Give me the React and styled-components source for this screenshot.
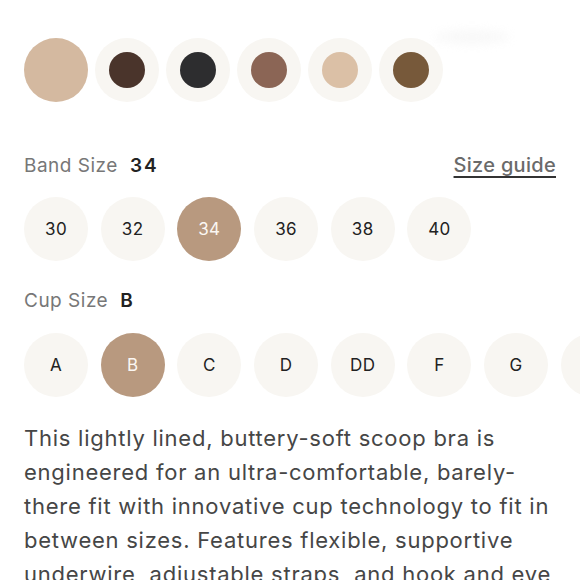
import React from 'react'
import styled, { createGlobalStyle } from 'styled-components'

const GlobalStyle = createGlobalStyle`
  html, body {
    margin: 0;
    padding: 0;
    background: #ffffff;
    overflow: hidden;
  }
  body {
    font-family: Inter, "Noto Sans", "Liberation Sans", sans-serif;
    -webkit-font-smoothing: antialiased;
  }
`

const Page = styled.div`
  position: relative;
  width: 580px;
  height: 580px;
  overflow: hidden;
  padding: 38px 24px 0 24px;
  box-sizing: border-box;

  &::after {
    content: '';
    position: absolute;
    left: 434px;
    top: 30px;
    width: 76px;
    height: 14px;
    border-radius: 50%;
    background: #f4f4f4;
    filter: blur(5px);
    opacity: 0.6;
  }
`

const SwatchRow = styled.div`
  display: flex;
  gap: 7px;
`

const Swatch = styled.button`
  width: 64px;
  height: 64px;
  flex: 0 0 64px;
  border: none;
  padding: 0;
  border-radius: 50%;
  background: ${p => (p.$active ? p.$color : '#f8f6f2')};
  display: flex;
  align-items: center;
  justify-content: center;
`

const Dot = styled.span`
  width: 36px;
  height: 36px;
  border-radius: 50%;
  background: ${p => p.$color};
`

const LabelRow = styled.div`
  display: flex;
  align-items: baseline;
  justify-content: space-between;
  margin-top: ${p => p.$top}px;
  height: 24px;
  line-height: 24px;
`

const Label = styled.div`
  display: flex;
  align-items: baseline;
  gap: 12px;
  font-size: 19px;
  letter-spacing: 0.5px;
  color: #777777;
`

const Value = styled.span`
  font-weight: 600;
  color: #222222;
  letter-spacing: 2px;
`

const Guide = styled.a`
  font-size: 20px;
  font-weight: 500;
  letter-spacing: 0.3px;
  color: #6a6a6a;
  text-decoration: underline;
  text-decoration-color: #333333;
  text-decoration-thickness: 2px;
  text-underline-offset: 4px;
`

const SizeRow = styled.div`
  display: flex;
  gap: 12.7px;
  margin-top: ${p => p.$top}px;
  width: max-content;
`

const SizeButton = styled.button`
  width: 64px;
  height: 64px;
  flex: 0 0 64px;
  border: none;
  padding: 0;
  border-radius: 50%;
  background: ${p => (p.$active ? '#b8997f' : '#f8f6f2')};
  color: ${p => (p.$active ? '#fbf7f3' : '#222222')};
  font-family: Inter, "Noto Sans", "Liberation Sans", sans-serif;
  font-size: 17px;
  font-weight: 400;
  letter-spacing: 0.4px;
`

const Description = styled.p`
  margin: 24px 0 0 0;
  font-size: 22px;
  line-height: 34px;
  letter-spacing: 0.75px;
  color: #464646;
`

const colors = [
  { c: '#d4b9a0', active: true },
  { c: '#4a342b' },
  { c: '#2d2d2f' },
  { c: '#8b6555' },
  { c: '#dbc0a6' },
  { c: '#77593a' },
]

const bands = ['30', '32', '34', '36', '38', '40']
const cups = ['A', 'B', 'C', 'D', 'DD', 'F', 'G', 'H']

const App = () => {
  return (
    <>
      <GlobalStyle />
      <Page>
        <SwatchRow>
          {colors.map((s, i) => (
            <Swatch key={i} $active={s.active} $color={s.c}>
              {!s.active && <Dot $color={s.c} />}
            </Swatch>
          ))}
        </SwatchRow>

        <LabelRow $top={51}>
          <Label>
            Band Size <Value>34</Value>
          </Label>
          <Guide href="#">Size guide</Guide>
        </LabelRow>
        <SizeRow $top={20}>
          {bands.map(b => (
            <SizeButton key={b} $active={b === '34'}>{b}</SizeButton>
          ))}
        </SizeRow>

        <LabelRow $top={28}>
          <Label>
            Cup Size <Value>B</Value>
          </Label>
        </LabelRow>
        <SizeRow $top={20}>
          {cups.map(c => (
            <SizeButton key={c} $active={c === 'B'}>{c}</SizeButton>
          ))}
        </SizeRow>

        <Description>
          This lightly lined, buttery-soft scoop bra is engineered for an
          ultra-comfortable, barely-there fit with innovative cup technology to
          fit in between sizes. Features flexible, supportive underwire,
          adjustable straps, and hook and eye closure.
        </Description>
      </Page>
    </>
  )
}

export default App
